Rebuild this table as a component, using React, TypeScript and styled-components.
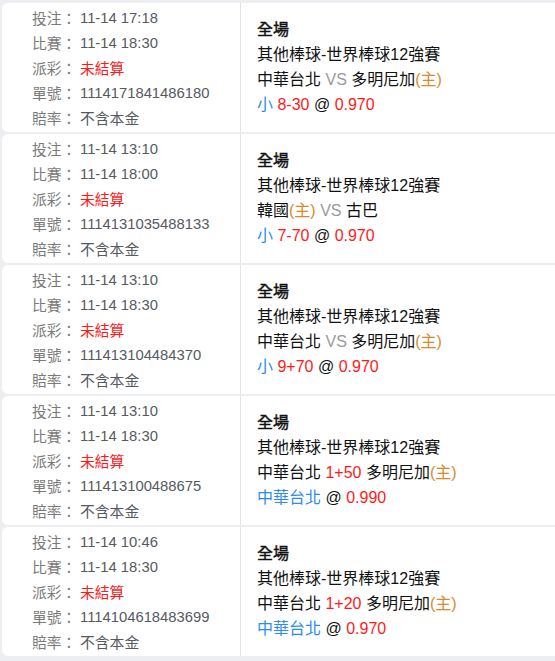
import React, { FC } from 'react';
import styled, { createGlobalStyle } from 'styled-components';

type Part = { text: string; tone?: 'red' | 'blue' | 'gray' | 'orange' | 'black' };

interface IBet {
    placed: string;
    match: string;
    orderNo: string;
    league: string;
    teams: Part[];
    pick: Part[];
}

const bets: IBet[] = [
    {
        placed: '11-14 17:18',
        match: '11-14 18:30',
        orderNo: '1114171841486180',
        league: '其他棒球-世界棒球12強賽',
        teams: [{ text: '中華台北 ' }, { text: 'VS', tone: 'gray' }, { text: ' 多明尼加' }, { text: '(主)', tone: 'orange' }],
        pick: [{ text: '小 ', tone: 'blue' }, { text: '8-30', tone: 'red' }, { text: ' @ ' }, { text: '0.970', tone: 'red' }],
    },
    {
        placed: '11-14 13:10',
        match: '11-14 18:00',
        orderNo: '1114131035488133',
        league: '其他棒球-世界棒球12強賽',
        teams: [{ text: '韓國' }, { text: '(主)', tone: 'orange' }, { text: ' VS', tone: 'gray' }, { text: ' 古巴' }],
        pick: [{ text: '小 ', tone: 'blue' }, { text: '7-70', tone: 'red' }, { text: ' @ ' }, { text: '0.970', tone: 'red' }],
    },
    {
        placed: '11-14 13:10',
        match: '11-14 18:30',
        orderNo: '111413104484370',
        league: '其他棒球-世界棒球12強賽',
        teams: [{ text: '中華台北 ' }, { text: 'VS', tone: 'gray' }, { text: ' 多明尼加' }, { text: '(主)', tone: 'orange' }],
        pick: [{ text: '小 ', tone: 'blue' }, { text: '9+70', tone: 'red' }, { text: ' @ ' }, { text: '0.970', tone: 'red' }],
    },
    {
        placed: '11-14 13:10',
        match: '11-14 18:30',
        orderNo: '111413100488675',
        league: '其他棒球-世界棒球12強賽',
        teams: [{ text: '中華台北 ' }, { text: '1+50', tone: 'red' }, { text: ' 多明尼加' }, { text: '(主)', tone: 'orange' }],
        pick: [{ text: '中華台北', tone: 'blue' }, { text: ' @ ' }, { text: '0.990', tone: 'red' }],
    },
    {
        placed: '11-14 10:46',
        match: '11-14 18:30',
        orderNo: '1114104618483699',
        league: '其他棒球-世界棒球12強賽',
        teams: [{ text: '中華台北 ' }, { text: '1+20', tone: 'red' }, { text: ' 多明尼加' }, { text: '(主)', tone: 'orange' }],
        pick: [{ text: '中華台北', tone: 'blue' }, { text: ' @ ' }, { text: '0.970', tone: 'red' }],
    },
];

const toneColor = {
    red: '#ff1a1a',
    blue: '#2b8cf0',
    gray: '#9a9a9a',
    orange: '#d68a2e',
    black: '#111',
};

const App: FC = () => {
    const renderParts = (parts: Part[]) =>
        parts.map((p, i) => (
            <Tone key={i} tone={p.tone || 'black'}>
                {p.text}
            </Tone>
        ));

    return (
        <>
            <GlobalStyle />
            <List>
                {bets.map((bet, idx) => (
                    <Card key={idx}>
                        <Info>
                            <InfoRow>
                                <Label>投注：</Label>
                                <Value>{bet.placed}</Value>
                            </InfoRow>
                            <InfoRow>
                                <Label>比賽：</Label>
                                <Value>{bet.match}</Value>
                            </InfoRow>
                            <InfoRow>
                                <Label>派彩：</Label>
                                <Value status>未結算</Value>
                            </InfoRow>
                            <InfoRow>
                                <Label>單號：</Label>
                                <Value>{bet.orderNo}</Value>
                            </InfoRow>
                            <InfoRow>
                                <Label>賠率：</Label>
                                <Value>不含本金</Value>
                            </InfoRow>
                        </Info>
                        <Detail>
                            <Market>全場</Market>
                            <Line>{bet.league}</Line>
                            <Line>{renderParts(bet.teams)}</Line>
                            <Line>{renderParts(bet.pick)}</Line>
                        </Detail>
                    </Card>
                ))}
            </List>
        </>
    );
};

const GlobalStyle = createGlobalStyle`
    html, body{
        margin: 0;
        padding: 0;
        background: #eceef2;
        overflow: hidden;
    }
    body{
        font-family: "Liberation Sans", "Noto Sans CJK TC", sans-serif;
    }
`;

const List = styled.div`
    padding: 3px 0 0 2px;
    display: flex;
    flex-direction: column;
    gap: 2px;
`;

const Card = styled.div`
    display: flex;
    height: 129px;
    background: #fff;
    border-radius: 6px 0 0 6px;
`;

const Info = styled.div`
    width: 239px;
    flex-shrink: 0;
    box-sizing: border-box;
    padding: 2px 0 0 30px;
    border-right: 1px solid #e3e4e8;
    display: flex;
    flex-direction: column;
`;

const InfoRow = styled.div`
    display: flex;
    height: 25px;
    align-items: center;
    font-size: 14.8px;
`;

const Label = styled.span`
    width: 48px;
    color: #7a7a7a;
    white-space: nowrap;
`;

const Value = styled.span<{ status?: boolean }>`
    color: ${({ status }) => (status ? '#ff1a1a' : '#555a62')};
    white-space: nowrap;
`;

const Detail = styled.div`
    flex: 1;
    padding: 0 0 1px 16px;
    display: flex;
    flex-direction: column;
    justify-content: center;
    color: #111;
    font-size: 16px;
`;

const Line = styled.div`
    height: 25px;
    line-height: 25px;
    white-space: nowrap;
`;

const Market = styled(Line)`
    font-weight: 400;
    -webkit-text-stroke: 0.45px #111;
`;

const Tone = styled.span<{ tone: keyof typeof toneColor }>`
    color: ${({ tone }) => toneColor[tone]};
`;

export default App;
